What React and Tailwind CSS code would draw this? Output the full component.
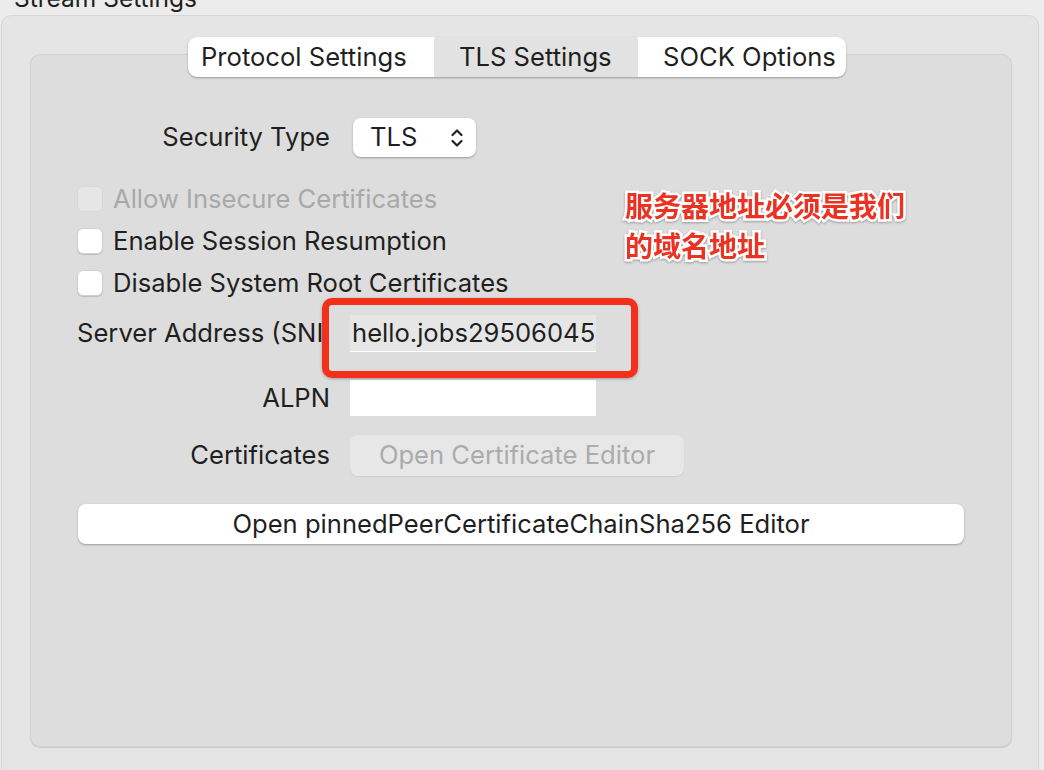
export default function App() {
  const font = "[font-family:Inter,'Noto_Sans_CJK_SC',sans-serif]";
  return (
    <div className={`relative w-[1044px] h-[770px] overflow-hidden bg-[#ececec] text-[#1f1f1f] ${font}`}>
      <div className="flex h-[15px] items-start pl-[14px]">
        <div className="-mt-[14px] text-[24.5px] leading-[25px] text-[#1f1f1f]">Stream Settings</div>
      </div>
      <div className="ml-[1px] w-[1038px] h-[800px] rounded-[10px] border border-[#d6d6d6] bg-[#e5e5e5] pt-[21px]">
        <div className="relative z-10 ml-[186px] flex h-[40px] w-[658px] overflow-hidden rounded-[9px] bg-white text-[25.6px] shadow-[0_1px_2px_rgba(0,0,0,0.3)]">
          <div className="flex w-[246px] items-center pl-[13px]">Protocol Settings</div>
          <div className="flex w-[204px] items-center pl-[25px] bg-[#e2e2e2]">TLS Settings</div>
          <div className="flex w-[208px] items-center pl-[25px]">SOCK Options</div>
        </div>
        <div className="-mt-[23px] ml-[28px] w-[982px] h-[693px] rounded-[10px] border border-[#d2d2d2] bg-[#dddddd] shadow-[0_1px_1px_rgba(0,0,0,0.12)] pl-[46px] pt-[63px] text-[25.6px]">
          {/* Security type */}
          <div className="flex h-[39px] items-center">
            <div className="w-[253px] text-right">Security Type</div>
            <div className="ml-[23px] flex h-[39px] w-[123px] items-center justify-between rounded-[8px] bg-white pl-[17px] pr-[12px] shadow-[0_1px_2px_rgba(0,0,0,0.3)]">
              <span>TLS</span>
              <svg width="14" height="22" viewBox="0 0 14 22" fill="none" stroke="#222" strokeWidth="2.2" strokeLinecap="round" strokeLinejoin="round">
                <path d="M2.5 8 L7 3.5 L11.5 8" />
                <path d="M2.5 14 L7 18.5 L11.5 14" />
              </svg>
            </div>
          </div>
          {/* Checkboxes */}
          <div className="mt-[21px]">
            <div className="flex h-[42px] items-center gap-[10px] text-[#a9a9a9]">
              <div className="h-[26px] w-[26px] rounded-[6px] border border-[#d8d8d8] bg-[#e6e6e6]" />
              <span>Allow Insecure Certificates</span>
            </div>
            <div className="flex h-[42px] items-center gap-[10px]">
              <div className="h-[26px] w-[26px] rounded-[6px] border border-[#d0d0d0] bg-white shadow-[0_1px_1px_rgba(0,0,0,0.15)]" />
              <span>Enable Session Resumption</span>
            </div>
            <div className="flex h-[42px] items-center gap-[10px]">
              <div className="h-[26px] w-[26px] rounded-[6px] border border-[#d0d0d0] bg-white shadow-[0_1px_1px_rgba(0,0,0,0.15)]" />
              <span>Disable System Root Certificates</span>
            </div>
          </div>
          {/* Server address */}
          <div className="mt-[11px] flex h-[37px] items-center">
            <div className="w-[250px] overflow-hidden whitespace-nowrap">Server Address (SNI)</div>
            <div className="ml-[23px] flex h-[37px] w-[246px] items-center overflow-hidden border-b border-white bg-[#e6e6e6] pl-[2px] whitespace-nowrap">
              hello.jobs29506045
            </div>
          </div>
          {/* ALPN */}
          <div className="mt-[28px] flex h-[36px] items-center">
            <div className="w-[253px] text-right">ALPN</div>
            <div className="ml-[20px] h-[36px] w-[246px] bg-white" />
          </div>
          {/* Certificates */}
          <div className="mt-[19px] flex h-[41px] items-center">
            <div className="w-[253px] text-right">Certificates</div>
            <div className="ml-[20px] flex h-[41px] w-[334px] items-center justify-center rounded-[8px] bg-[#e7e7e7] text-[#ababab] shadow-[0_1px_1px_rgba(0,0,0,0.08)]">
              Open Certificate Editor
            </div>
          </div>
          {/* pinned */}
          <div className="mt-[28px] ml-[1px] flex h-[40px] w-[886px] items-center justify-center rounded-[8px] bg-white shadow-[0_1px_2px_rgba(0,0,0,0.3)]">
            Open pinnedPeerCertificateChainSha256 Editor
          </div>
        </div>
      </div>

      {/* annotation rectangle */}
      <div className="absolute left-[322px] top-[298px] h-[80px] w-[316px] rounded-[10px] border-[7px] border-[#f2301c] shadow-[0_1px_3px_rgba(0,0,0,0.3)]" />
      {/* annotation text */}
      <div className="absolute left-[625px] top-[185px] text-[28px] font-bold leading-[40px] text-[#ea3323] [-webkit-text-stroke:5px_white] [paint-order:stroke_fill] [font-family:'Noto_Sans_CJK_SC',sans-serif] [filter:drop-shadow(0_1px_1px_rgba(0,0,0,0.3))]">
        <div>服务器地址必须是我们</div>
        <div>的域名地址</div>
      </div>
    </div>
  );
}
